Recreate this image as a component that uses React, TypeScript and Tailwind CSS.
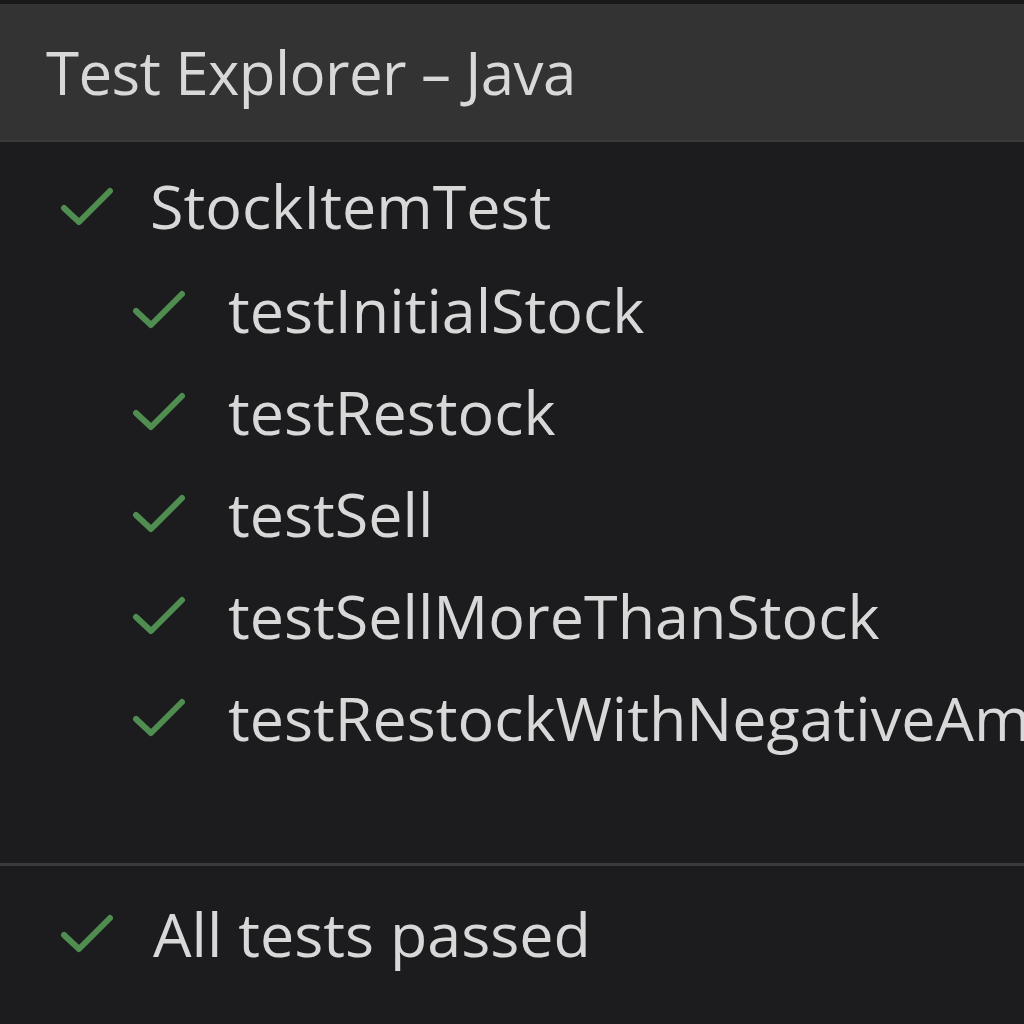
import React from 'react'

const tests = [
  'testInitialStock',
  'testRestock',
  'testSell',
  'testSellMoreThanStock',
  'testRestockWithNegativeAmount',
]

const Check = ({ className }: { className?: string }) => (
  <svg viewBox="0 0 54 40" className={className} fill="none">
    <path d="M4 22 L19 36 L50 5" stroke="#4f8d51" strokeWidth="6" strokeLinecap="round" strokeLinejoin="round" />
  </svg>
)

const App = () => {
  return (
    <div
      className="w-[1024px] h-[1024px] overflow-hidden bg-[#1c1c1e] text-[#d8d8d8] flex flex-col"
      style={{ fontFamily: '"Open Sans", "Noto Sans", sans-serif' }}
    >
      <div className="h-[4px] bg-[#191919]" />
      <div className="h-[138px] bg-[#333333] border-b-2 border-b-[#3b3b3b] flex items-center pl-[46px]">
        <p className="text-[60px] leading-none tracking-[-0.6px] whitespace-nowrap">Test Explorer – Java</p>
      </div>

      <div className="h-[721px] flex flex-col pt-[36px]">
        <div className="flex items-center h-[105px] pl-[60px] gap-[36px] -mt-[25px]">
          <Check className="w-[54px] h-[40px] shrink-0" />
          <p className="text-[61px] leading-none whitespace-nowrap">StockItemTest</p>
        </div>
        {tests.map((t) => (
          <div className="flex items-center h-[102px] pl-[132px] gap-[42px]" key={t}>
            <Check className="w-[54px] h-[40px] shrink-0" />
            <p className="text-[61px] leading-none whitespace-nowrap">{t}</p>
          </div>
        ))}
      </div>

      <div className="h-[3px] bg-[#3a3a3a]" />
      <div className="flex items-center h-[140px] pl-[60px] pb-[6px] gap-[39px]">
        <Check className="w-[54px] h-[40px] shrink-0" />
        <p className="text-[61px] leading-none whitespace-nowrap">All tests passed</p>
      </div>
    </div>
  )
}

export default App
